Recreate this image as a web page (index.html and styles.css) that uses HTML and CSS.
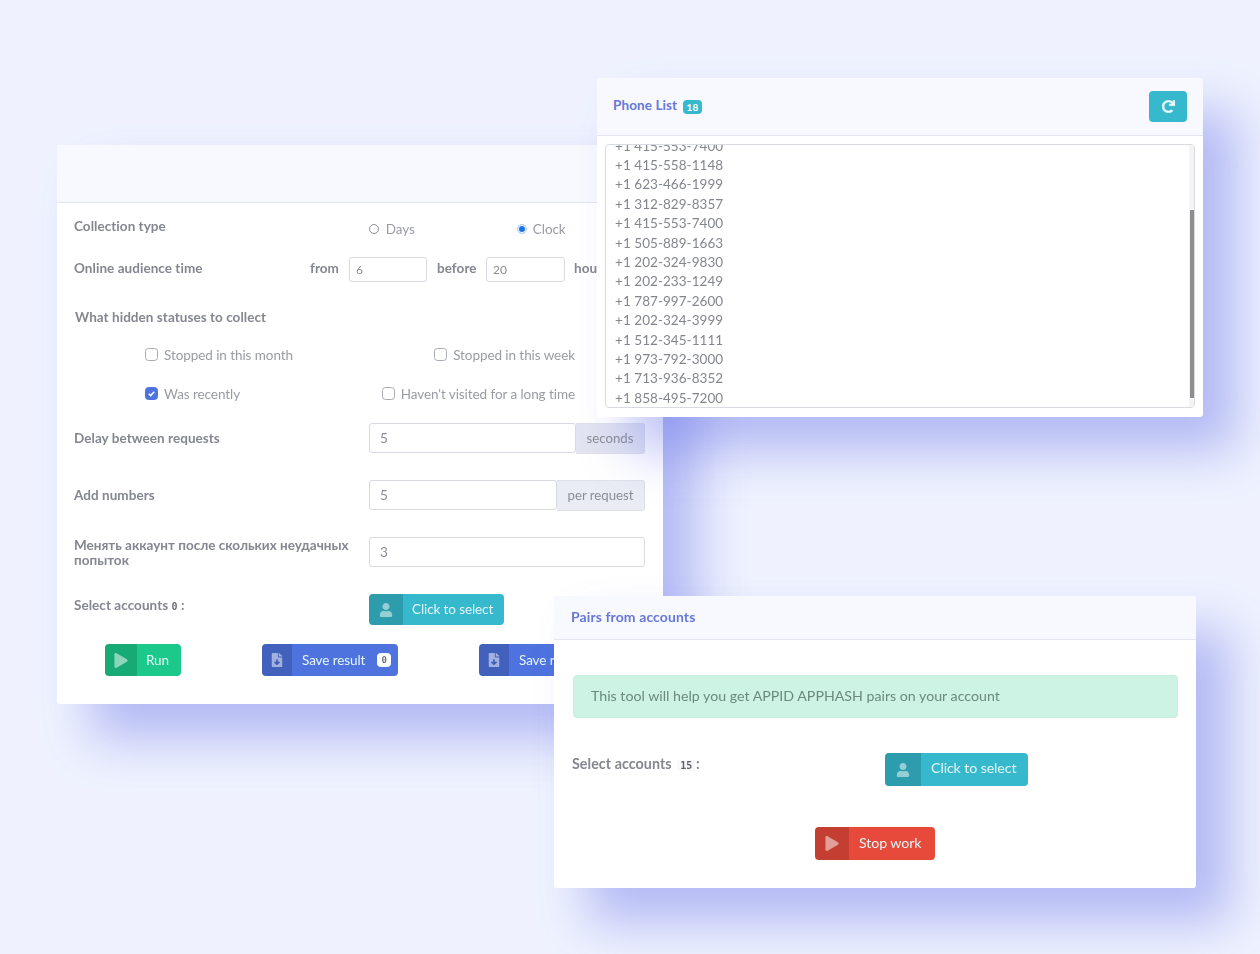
FILE: index.html
```html
<!DOCTYPE html>
<html lang="en">
<head>
<meta charset="utf-8">
<title>Tools</title>
<link rel="stylesheet" href="styles.css">
</head>
<body>
<svg class="sprite" width="0" height="0" aria-hidden="true">
  <symbol id="i-user" viewBox="0 0 448 512"><path d="M224 256c70.7 0 128-57.3 128-128S294.7 0 224 0 96 57.3 96 128s57.3 128 128 128zm89.6 32h-16.7c-22.2 10.2-46.9 16-72.9 16s-50.6-5.8-72.9-16h-16.7C60.2 288 0 348.2 0 422.4V464c0 26.5 21.5 48 48 48h352c26.5 0 48-21.5 48-48v-41.6c0-74.2-60.2-134.4-134.4-134.4z"/></symbol>
  <symbol id="i-file" viewBox="0 0 384 512"><path d="M224 136V0H24C10.7 0 0 10.7 0 24v464c0 13.3 10.7 24 24 24h336c13.3 0 24-10.7 24-24V160H248c-13.2 0-24-10.8-24-24zm76.45 211.36l-96.42 95.7c-6.65 6.61-17.39 6.61-24.04 0l-96.42-95.7C73.42 337.29 80.54 320 94.82 320H160v-80c0-8.84 7.16-16 16-16h32c8.84 0 16 7.16 16 16v80h65.18c14.28 0 21.4 17.29 11.27 27.36zM377 105L279.1 7c-4.5-4.5-10.6-7-17-7H256v128h128v-6.1c0-6.3-2.5-12.4-7-16.9z"/></symbol>
  <symbol id="i-play" viewBox="0 0 448 512"><path d="M424.4 214.7L72.4 6.6C43.8-10.3 0 6.1 0 47.9V464c0 37.5 40.7 60.1 72.4 41.3l352-208c31.4-18.5 31.5-64.1 0-82.6z"/></symbol>
  <symbol id="i-redo" viewBox="0 0 512 512"><path d="M500.33 0h-47.41a12 12 0 0 0-12 12.57l4 82.76A247.42 247.42 0 0 0 256 8C119.34 8 8.05 119.53 8 256.19 7.95 393.07 119.12 504 256 504a247.1 247.1 0 0 0 166.18-63.91 12 12 0 0 0 .48-17.43l-34-34a12 12 0 0 0-16.38-.55A176 176 0 1 1 402.1 157.8l-101.53-4.87a12 12 0 0 0-12.57 12v47.41a12 12 0 0 0 12 12h200.33a12 12 0 0 0 12-12V12a12 12 0 0 0-12-12z"/></symbol>
</svg>

<section class="card card-collect">
  <header class="card-head"></header>
  <div class="collect-body">
    <div class="row row-type">
      <span class="label">Collection type</span>
      <div class="radios">
        <span class="opt radio-days"><i class="radio"></i>Days</span>
        <span class="opt radio-clock"><i class="radio on"></i>Clock</span>
      </div>
    </div>
    <div class="row row-time">
      <span class="label label-time">Online audience time</span>
      <span class="label word-from">from</span>
      <span class="input small">6</span>
      <span class="label word-before">before</span>
      <span class="input small small-2">20</span>
      <span class="label word-hours">hours</span>
    </div>
    <div class="label label-hidden">What hidden statuses to collect</div>
    <div class="row row-check">
      <span class="opt check-left"><i class="check"></i>Stopped in this month</span>
      <span class="opt check-right"><i class="check"></i>Stopped in this week</span>
    </div>
    <div class="row row-check row-check-2">
      <span class="opt check-left"><i class="check on"><svg viewBox="0 0 12 12"><path d="M3 6.2l2.1 2.1L9 4" fill="none" stroke="#fff" stroke-width="1.7"/></svg></i>Was recently</span>
      <span class="opt check-right"><i class="check"></i>Haven't visited for a long time</span>
    </div>
    <div class="row row-field row-delay">
      <span class="label col-label">Delay between requests</span>
      <div class="group"><span class="input grow">5</span><span class="addon addon-dark">seconds</span></div>
    </div>
    <div class="row row-field row-add">
      <span class="label col-label">Add numbers</span>
      <div class="group"><span class="input grow">5</span><span class="addon addon-wide">per request</span></div>
    </div>
    <div class="row row-field row-change">
      <span class="label col-label label-two">Менять аккаунт после скольких неудачных попыток</span>
      <div class="group"><span class="input grow">3</span></div>
    </div>
    <div class="row row-field row-select">
      <span class="label col-label">Select accounts <b class="mono">0</b> :</span>
      <a class="btn btn-info"><span class="btn-ico"><svg class="ico"><use href="#i-user"/></svg></span><span class="btn-txt">Click to select</span></a>
    </div>
    <div class="row row-actions">
      <a class="btn btn-green"><span class="btn-ico"><svg class="ico ico-play"><use href="#i-play"/></svg></span><span class="btn-txt">Run</span></a>
      <a class="btn btn-blue"><span class="btn-ico"><svg class="ico"><use href="#i-file"/></svg></span><span class="btn-txt">Save result<em class="pill">0</em></span></a>
      <a class="btn btn-blue"><span class="btn-ico"><svg class="ico"><use href="#i-file"/></svg></span><span class="btn-txt">Save result<em class="pill">0</em></span></a>
    </div>
  </div>
</section>

<section class="card card-phones">
  <header class="card-head head-phones">
    <h2 class="title">Phone List <span class="count">18</span></h2>
    <a class="refresh"><svg class="ico"><use href="#i-redo"/></svg></a>
  </header>
  <div class="phones-wrap">
    <div class="phones">
      <div class="phones-inner">
        <div>+1 415-553-7400</div>
        <div>+1 415-558-1148</div>
        <div>+1 623-466-1999</div>
        <div>+1 312-829-8357</div>
        <div>+1 415-553-7400</div>
        <div>+1 505-889-1663</div>
        <div>+1 202-324-9830</div>
        <div>+1 202-233-1249</div>
        <div>+1 787-997-2600</div>
        <div>+1 202-324-3999</div>
        <div>+1 512-345-1111</div>
        <div>+1 973-792-3000</div>
        <div>+1 713-936-8352</div>
        <div>+1 858-495-7200</div>
      </div>
      <i class="track"></i>
      <i class="thumb"></i>
    </div>
  </div>
</section>

<section class="card card-pairs">
  <header class="card-head head-pairs"><h2 class="title title-pairs">Pairs from accounts</h2></header>
  <div class="pairs-body">
    <div class="alert"><span class="alert-txt">This tool will help you get APPID APPHASH pairs on your account</span></div>
    <div class="pairs-select">
      <span class="label label-pairs">Select accounts <b class="kbd">15</b> :</span>
      <a class="btn btn-info btn-big"><span class="btn-ico"><svg class="ico"><use href="#i-user"/></svg></span><span class="btn-txt">Click to select</span></a>
    </div>
    <div class="pairs-stop">
      <a class="btn btn-red btn-big"><span class="btn-ico"><svg class="ico ico-play"><use href="#i-play"/></svg></span><span class="btn-txt">Stop work</span></a>
    </div>
  </div>
</section>
</body>
</html>
```
FILE: styles.css
```css
* { box-sizing: border-box; }
html, body { margin: 0; height: 954px; }
body {
  position: relative;
  overflow: hidden;
  background: #eff2fe;
  font-family: "Lato", "Noto Sans", sans-serif;
  font-size: 13.5px;
  color: #85878f;
}
.sprite { position: absolute; }
.card {
  position: absolute;
  background: #fff;
  border-radius: 3px;
  box-shadow: 34px 34px 50px rgba(96, 108, 232, .42);
  filter: blur(.4px);
}
.card-collect { left: 57px; top: 145px; width: 606px; height: 559px; }
.card-phones { left: 597px; top: 78px; width: 606px; height: 339px; }
.card-pairs { left: 554px; top: 596px; width: 642px; height: 292px; }
.card-head {
  height: 58px;
  background: #f8f9fe;
  border-bottom: 1px solid #e3e6f0;
  border-radius: 3px 3px 0 0;
}
.collect-body { padding: 0 18px 0 17px; }
.row { display: flex; align-items: center; }
.label { font-weight: 700; color: #858790; letter-spacing: .05px; }
.opt { display: inline-flex; align-items: center; color: #9a9ca4; letter-spacing: -.07px; }

.row-type { height: 26px; margin-top: 11px; }
.row-type .label { position: relative; bottom: 1px; }
.radios { margin: 4px 0 0 203px; display: flex; }
.radio-days { width: 148px; }
.radio {
  width: 10px; height: 10px; margin-right: 7px;
  border: 1px solid #8c8e94; border-radius: 50%;
}
.radio.on { background: #1a73e8; border-color: #c3d6f5; box-shadow: inset 0 0 0 1px #fff; margin-right: 6px; }

.row-time { height: 25px; margin-top: 17px; }
.row-time .label { position: relative; bottom: 2px; }
.label-time { width: 236px; }
.word-from { width: 39px; }
.word-before { width: 49px; margin-left: 10px; }
.word-hours { margin-left: 9px; }
.input {
  display: flex; align-items: center;
  height: 100%;
  padding-left: 10px;
  background: #fff;
  border: 1px solid #d8dae2;
  border-radius: 3px;
  color: #8b8d95;
}
.small { width: 78px; padding-left: 6px; font-size: 12px; }
.small-2 { width: 79px; }

.label-hidden { margin: 26px 0 0 1px; line-height: 19px; }
.row-check { margin-top: 18px; height: 19px; padding-left: 71px; padding-right: 70px; justify-content: space-between; }
.row-check-2 { margin-top: 20px; }
.check {
  width: 13px; height: 13px; margin-right: 6px;
  border: 1px solid #a9abb3; border-radius: 3.5px;
  display: block;
}
.check.on { background: #4e73df; border-color: #4e73df; }
.check.on svg { display: block; width: 11px; height: 11px; }

.col-label { width: 295px; flex: none; position: relative; bottom: 1px; }
.group { flex: 1; display: flex; height: 100%; }
.grow { flex: 1; height: 30px; }
.row-field { height: 31px; }
.row-delay { margin-top: 20px; }
.row-add { margin-top: 26px; }
.row-change { margin-top: 26px; }
.row-select { margin-top: 26px; height: 31px; }
.row-select .col-label { bottom: 5px; }
.label-two { line-height: 15px; padding-right: 10px; bottom: 0; letter-spacing: 0; }
.addon {
  display: flex; align-items: center; justify-content: center;
  flex: none;
  width: 69px;
  padding-bottom: 2px;
  background: #eaecf4;
  border: 1px solid #dfe1ea;
  border-left: 0;
  border-radius: 0 3px 3px 0;
  color: #8b8d95;
  font-size: 13.2px;
  white-space: nowrap;
}
.addon-wide { width: 88px; }
.addon-dark { background: #e2e4f1; }
.mono { font-family: "DejaVu Sans Mono", monospace; font-size: 10px; font-weight: 700; color: #6d6f75; }

.btn {
  display: inline-flex;
  flex: none;
  height: 31px;
  border-radius: 4px;
  color: #e4f6f8;
  overflow: hidden;
  white-space: nowrap;
}
.btn-ico {
  display: flex; align-items: center; justify-content: center;
  background: rgba(0, 0, 0, .15);
}
.btn-txt { display: flex; align-items: center; letter-spacing: -.1px; }
.ico { width: 14px; height: 14px; fill: rgba(255, 255, 255, .5); display: block; }
.ico-play { width: 14px; height: 15px; }
.btn-info { background: #36b9cc; width: 135px; }
.btn-info .btn-ico { width: 34px; }
.btn-info .btn-txt { margin-left: 9px; padding-bottom: 2px; }
.row-actions { margin-top: 19px; padding-left: 31px; overflow: hidden; }
.row-actions .btn { height: 32px; }
.btn-green { background: #1cc88a; width: 76px; margin-right: 81px; }
.btn-green .btn-ico { width: 32px; }
.btn-green .btn-txt { margin-left: 9px; }
.btn-blue { background: #4e73df; width: 136px; margin-right: 81px; }
.btn-blue .btn-ico { width: 30px; }
.btn-blue .btn-txt { margin-left: 10px; }
.btn-red { background: #e74a3b; }
.pill {
  margin-left: 12px;
  width: 14px; height: 14px;
  display: flex; align-items: center; justify-content: center;
  background: #fff;
  border-radius: 4px;
  color: #6d7178;
  font: 700 9px "DejaVu Sans Mono", monospace;
}

.title { margin: 0; font-size: 13.5px; font-weight: 700; color: #6777d8; letter-spacing: .1px; }
.title-pairs { font-size: 14px; position: relative; bottom: 1px; }
.head-phones { display: flex; align-items: center; justify-content: space-between; padding: 0 16px; }
.head-phones .title { position: relative; bottom: 1px; }
.count {
  display: inline-block;
  margin-left: 2px;
  padding: 1px 4px;
  background: #36b9cc;
  border-radius: 4px;
  color: #fff;
  font-size: 10px;
  font-weight: 700;
  vertical-align: -1px;
}
.refresh {
  width: 38px; height: 31px;
  display: flex; align-items: center; justify-content: center;
  background: #36b9cc;
  border-radius: 4px;
}
.refresh .ico { width: 13px; height: 13px; fill: #e9f8fa; stroke: #e9f8fa; stroke-width: 22; overflow: visible; }
.phones-wrap { padding: 8px 8px 0; }
.phones {
  position: relative;
  height: 264px;
  overflow: hidden;
  border: 1px solid #d8dae2;
  border-radius: 4px;
}
.phones-inner { margin-top: -8.4px; padding-left: 9px; font-size: 13.5px; line-height: 19.4px; color: #84868e; letter-spacing: .05px; }
.track {
  position: absolute;
  right: 0; top: 0; bottom: 0;
  width: 5px;
  background: #f4f4f5;
}
.thumb {
  position: absolute;
  right: 0; top: 65px;
  width: 4px; height: 188px;
  background: #8e8e8e;
}

.head-pairs { height: 44px; display: flex; align-items: center; padding-left: 17px; }
.pairs-body { padding: 35px 18px 0 19px; }
.alert {
  height: 43px;
  display: flex; align-items: center;
  padding-left: 17px;
  padding-bottom: 2px;
  background: #cdf3e4;
  border: 1px solid #c6efde;
  border-radius: 4px;
  color: #6a8a80;
  font-size: 14.2px;
}
.pairs-select { position: relative; display: flex; margin-top: 35px; height: 33px; }
.label-pairs { width: 313px; position: relative; top: 2px; margin-left: -1px; font-size: 14.3px; }
.kbd {
  display: inline-block;
  margin: 0 -3px 0 2px;
  padding: 0 3px;
  font: 700 10px "DejaVu Sans Mono", monospace;
  color: #5f6166;
  background: #f9f9fb;
}
.btn-big { height: 33px; font-size: 14.2px; }
.pairs-select .btn-info { width: 143px; }
.pairs-select .btn-ico { width: 36px; }
.pairs-select .btn-txt { margin-left: 10px; padding-bottom: 4px; }
.pairs-stop { margin-top: 41px; padding-left: 242px; }
.btn-red { width: 120px; }
.btn-red .btn-ico { width: 34px; }
.btn-red .btn-txt { margin-left: 10px; padding-bottom: 2px; }
```
